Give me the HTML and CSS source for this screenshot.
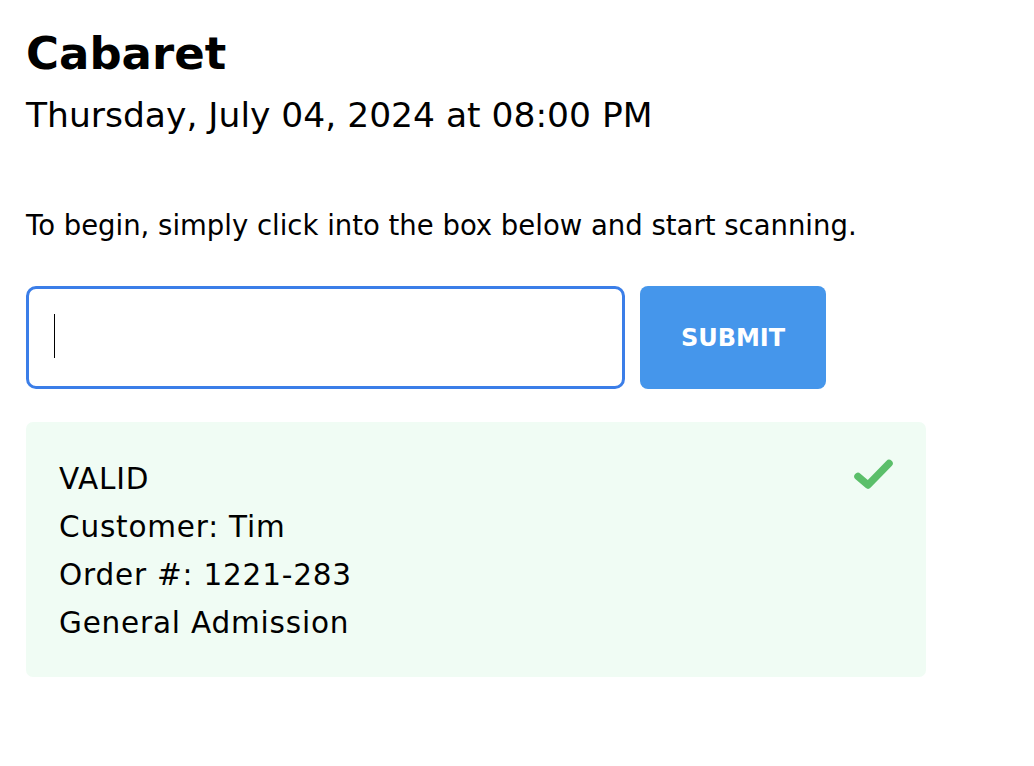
FILE: index.html
```html
<!DOCTYPE html>
<html lang="en">
<head>
<meta charset="utf-8">
<title>Cabaret - Scan</title>
<link rel="stylesheet" href="styles.css">
</head>
<body>
<main class="page">
  <h1 class="title">Cabaret</h1>
  <p class="date">Thursday, July 04, 2024 at 08:00 PM</p>
  <p class="intro">To begin, simply click into the box below and start scanning.</p>
  <form class="scan-row">
    <div class="field">
      <input class="scan-input" type="text" aria-label="Ticket code">
      <span class="caret"></span>
    </div>
    <button class="submit" type="button">SUBMIT</button>
  </form>
  <section class="result">
    <div class="result-lines">
      <div class="line">VALID</div>
      <div class="line">Customer: Tim</div>
      <div class="line">Order #: 1221-283</div>
      <div class="line">General Admission</div>
    </div>
    <svg class="check" width="41" height="32" viewBox="0 0 41 32" aria-hidden="true">
      <polyline points="5,18.5 15,27 36,5.5" fill="none" stroke="#5bbf6a" stroke-width="7.5" stroke-linecap="round" stroke-linejoin="round"/>
    </svg>
  </section>
</main>
</body>
</html>
```
FILE: styles.css
```css
html, body {
  margin: 0;
  padding: 0;
  background: #ffffff;
}

body {
  font-family: "DejaVu Sans", "Noto Sans", sans-serif;
  color: #000000;
}

.page {
  padding: 27px 26px 0 26px;
}

.title {
  margin: 0;
  font-size: 45px;
  line-height: 54px;
  font-weight: 700;
}

.date {
  margin: 13px 0 0 0;
  font-size: 34.5px;
  line-height: 42px;
  font-weight: 400;
}

.intro {
  margin: 72px 0 0 0;
  font-size: 27.5px;
  line-height: 34px;
}

.scan-row {
  margin: 44px 0 0 0;
  display: flex;
  gap: 15px;
  height: 103px;
}

.field {
  position: relative;
  width: 599px;
  height: 103px;
}

.scan-input {
  box-sizing: border-box;
  width: 100%;
  height: 100%;
  border: 3px solid #3b7ee8;
  border-radius: 10px;
  outline: none;
  background: #ffffff;
  padding: 0 26px;
  font-family: inherit;
  font-size: 28px;
  caret-color: transparent;
}

.caret {
  position: absolute;
  left: 28px;
  top: 28px;
  width: 1px;
  height: 44px;
  background: #000000;
}

.submit {
  width: 186px;
  height: 103px;
  border: none;
  border-radius: 8px;
  background: #4596eb;
  color: #ffffff;
  font-family: "DejaVu Sans", sans-serif;
  font-weight: 700;
  font-size: 24px;
  padding: 0;
  cursor: pointer;
}

.result {
  margin-top: 33px;
  width: 900px;
  box-sizing: border-box;
  height: 255px;
  padding: 33px 32px 30px 33px;
  background: #f0fcf4;
  border-radius: 7px;
  display: flex;
  align-items: flex-start;
}

.result-lines {
  flex: 1;
}

.line {
  font-size: 29.5px;
  line-height: 48px;
  letter-spacing: 0.8px;
}

.check {
  display: block;
  margin-top: 3px;
}
```
